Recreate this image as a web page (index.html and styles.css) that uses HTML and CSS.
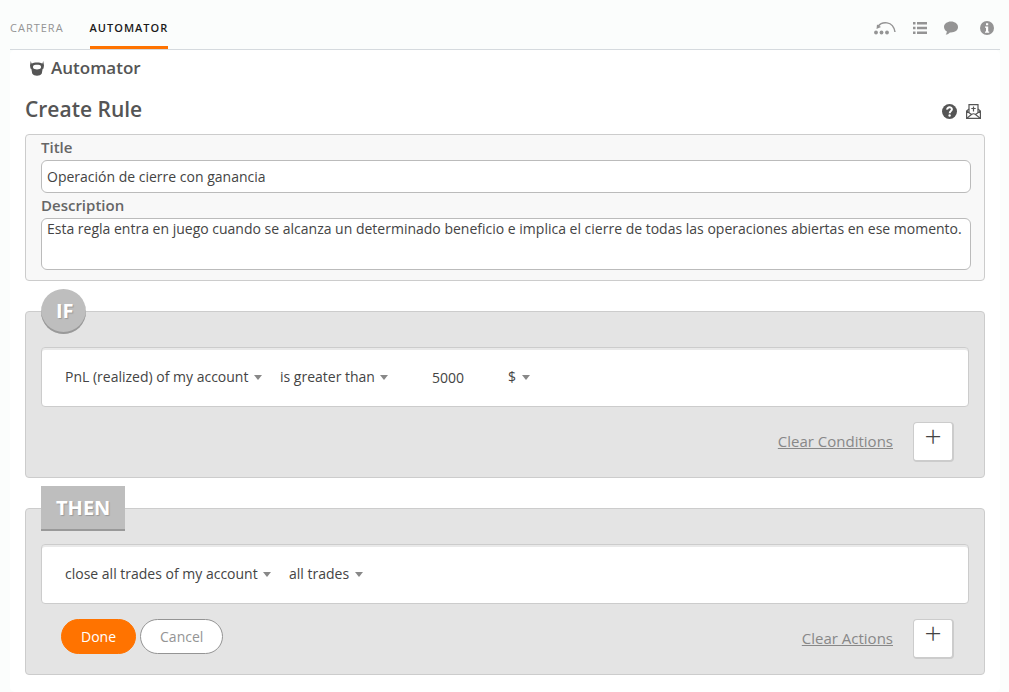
FILE: index.html
```
<!DOCTYPE html>
<html lang="es">
<head>
    <meta charset="UTF-8">
    <meta name="viewport" content="width=device-width, initial-scale=1.0">
    <title>Automator</title>
    <link rel="stylesheet" href="styles.css">
</head>
<body>

    <header class="topbar">
        <nav class="tabs">
            <a href="#" class="tab">Cartera</a>
            <a href="#" class="tab active">Automator</a>
        </nav>
        <div class="tools">
            <button class="icon-btn" aria-label="Tour">
                <svg width="22" height="14" viewBox="0 0 22 14">
                    <path d="M4 5.500C7.500 0.500 19 -1 21 11" fill="none" stroke="#949494" stroke-width="1.500"/>
                    <path d="M2.500 8L3 3.500L7 6Z" fill="#949494"/>
                    <circle cx="2" cy="11.500" r="1.900" fill="#949494"/>
                    <circle cx="7.500" cy="11.500" r="1.900" fill="#949494"/>
                    <circle cx="13" cy="11.500" r="1.900" fill="#949494"/>
                </svg>
            </button>
            <button class="icon-btn" aria-label="List">
                <svg width="14" height="12" viewBox="0 0 14 12" fill="#949494">
                    <path d="M0 0h2.500v2.500H0zM4 0h10v2.500H4zM0 4.800h2.500v2.500H0zM4 4.800h10v2.500H4zM0 9.500h2.500V12H0zM4 9.500h10V12H4z"/>
                </svg>
            </button>
            <button class="icon-btn" aria-label="Chat">
                <svg width="14" height="14" viewBox="0 0 14 14" fill="#949494">
                    <path d="M7 0.500C3 0.500 0 2.900 0 6c0 1.900 1.100 3.500 2.900 4.500C2.800 11.800 2.300 12.800 1.700 13.600 3.500 13.400 4.900 12.500 5.900 11.400 10.500 11.800 14 9.500 14 6 14 2.900 11 0.500 7 0.500z"/>
                </svg>
            </button>
            <button class="icon-btn" aria-label="Info">
                <svg width="14" height="14" viewBox="0 0 14 14">
                    <circle cx="7" cy="7" r="7" fill="#949494"/>
                    <path d="M6 2.200h2.200v2H6zM5 5.500h3.200v5H9.200v1.300H5v-1.300h1V6.800H5z" fill="#fff"/>
                </svg>
            </button>
        </div>
    </header>

    <main class="content">
        <h1 class="app-title">
            <svg width="14" height="15" viewBox="0 0 14 15" fill="#555">
                <path fill-rule="evenodd" d="M0.800 0L1.500 2.500C4 1 10 1 12.500 2.500L13.200 0 14 4.500 13.500 7.500 12.600 8 11.800 12.500C10 15.400 4 15.400 2.200 12.500L1.400 8 0.500 7.500 0 4.500zM4.500 4C2.500 4.400 2.500 7.300 4.500 8 6 8.500 8 8.500 9.500 8 11.500 7.300 11.500 4.400 9.500 4 8 3.600 6 3.600 4.500 4z"/>
            </svg>
            Automator
        </h1>

        <div class="page-head">
            <h2>Create Rule</h2>
            <div class="page-actions">
                <button class="icon-btn" aria-label="Help">
                    <svg width="15" height="15" viewBox="0 0 15 15">
                        <circle cx="7.500" cy="7.500" r="7.500" fill="#555"/>
                        <path d="M5.200 5.600C5 2.700 9.900 2.500 9.900 5.300 9.900 7.100 7.700 7 7.700 9.200" fill="none" stroke="#fff" stroke-width="2"/>
                        <circle cx="7.600" cy="11.500" r="1.200" fill="#fff"/>
                    </svg>
                </button>
                <button class="icon-btn" aria-label="Load template">
                    <svg width="15" height="15" viewBox="0 0 15 15" fill="none" stroke="#555" stroke-width="1.200">
                        <path d="M3 5L0.600 7V14.400H14.400V7L12 5M0.600 7L5.500 10.500M14.400 7L9.500 10.500M0.600 14.400L5.500 10.500Q7.500 9 9.500 10.500L14.400 14.400"/>
                        <path d="M3 8.500V0.600H12V8.500M7.500 2.500V7.500M5.300 4.500H9.700"/>
                    </svg>
                </button>
            </div>
        </div>

        <section class="info">
            <label for="title">Title</label>
            <input type="text" id="title" class="field" value="Operación de cierre con ganancia">
            <label for="description">Description</label>
            <textarea id="description" class="field">Esta regla entra en juego cuando se alcanza un determinado beneficio e implica el cierre de todas las operaciones abiertas en ese momento.</textarea>
        </section>

        <!-- Conditions -->
        <section class="panel">
            <span class="badge round">IF</span>
            <div class="rule">
                <span class="dropdown">
                    <select aria-label="Condition"><option>PnL (realized) of my account</option></select>
                </span>
                <span class="dropdown">
                    <select aria-label="Comparison"><option>is greater than</option></select>
                </span>
                <input type="text" class="amount" aria-label="Amount" value="5000">
                <span class="dropdown">
                    <select aria-label="Unit"><option>$</option></select>
                </span>
            </div>
            <div class="panel-foot">
                <a href="#" class="clear">Clear Conditions</a>
                <button class="add" aria-label="Add condition">+</button>
            </div>
        </section>

        <!-- Actions -->
        <section class="panel">
            <span class="badge">THEN</span>
            <div class="rule">
                <span class="dropdown">
                    <select aria-label="Action"><option>close all trades of my account</option></select>
                </span>
                <span class="dropdown">
                    <select aria-label="Trades"><option>all trades</option></select>
                </span>
            </div>
            <div class="panel-foot">
                <div class="buttons">
                    <button class="btn primary">Done</button>
                    <button class="btn">Cancel</button>
                </div>
                <a href="#" class="clear">Clear Actions</a>
                <button class="add" aria-label="Add action">+</button>
            </div>
        </section>
    </main>

</body>
</html>
```
FILE: styles.css
```
* {
    box-sizing: border-box;
}
body {
    margin: 0;
    padding: 0 9px 0 10px;
    min-height: 100vh;
    display: flex;
    flex-direction: column;
    font-family: "Open Sans", "Noto Sans", sans-serif;
    font-size: 14px;
    color: #444;
    background-color: #fbfdfc;
}
button, input, select, textarea {
    font: inherit;
    color: inherit;
}
button {
    cursor: pointer;
}

/* Top bar */
.topbar {
    display: flex;
    justify-content: space-between;
    height: 50px;
    border-bottom: 1px solid #d5dade;
}
.tabs {
    display: flex;
    gap: 26px;
}
.tab {
    padding-top: 9px;
    line-height: 37px;
    font-size: 11px;
    letter-spacing: 1px;
    text-transform: uppercase;
    text-decoration: none;
    color: #949494;
    border-bottom: 3px solid transparent;
}
.tab.active {
    font-weight: 600;
    color: #1a1a1a;
    border-bottom-color: #ff7300;
}
.tools {
    display: flex;
    align-items: center;
    gap: 17px;
    padding: 6px 6px 0 0;
}
.icon-btn {
    display: flex;
    padding: 0;
    border: none;
    background: none;
}
.tools .icon-btn:last-child {
    margin-left: 5px;
}

/* Page headings */
.content {
    flex: 1;
    padding: 0 15px 17px;
    border-radius: 5px;
    background-color: #fff;
}
.app-title {
    display: flex;
    align-items: center;
    gap: 7px;
    margin: 0;
    padding: 0 5px;
    line-height: 36px;
    font-size: 17px;
    font-weight: 600;
    color: #555;
}
.page-head {
    display: flex;
    justify-content: space-between;
    align-items: center;
    height: 48px;
    padding: 0 4px 2px 0;
}
.page-head h2 {
    margin: 0;
    font-size: 21px;
    font-weight: 600;
    color: #555;
}
.page-actions {
    display: flex;
    gap: 9px;
    padding-top: 4px;
}

/* Title and description */
.info {
    padding: 0 13px 10px 15px;
    border: 1px solid #ccc;
    border-radius: 4px;
    background-color: #f8f8f8;
}
.info label {
    display: block;
    line-height: 25px;
    font-size: 15px;
    font-weight: 600;
    color: #666;
}
.field {
    display: block;
    width: 100%;
    height: 33px;
    padding: 0 5px;
    border: 1px solid #bbb;
    border-radius: 6px;
    background-color: #fff;
}
textarea.field {
    height: 52px;
    line-height: 20px;
    resize: none;
}

/* IF / THEN panels */
.panel {
    position: relative;
    margin-top: 30px;
    padding: 35px 15px 15px;
    border: 1px solid #ccc;
    border-radius: 4px;
    background-color: #e4e4e4;
}
.badge {
    position: absolute;
    top: -23px;
    left: 15px;
    height: 45px;
    padding: 0 15px;
    line-height: 43px;
    font-size: 20px;
    font-weight: bold;
    color: #fff;
    text-shadow: 1px 1px 1px #999;
    background-color: #bebebe;
    box-shadow: inset 0 -2px 0 #999;
}
.badge.round {
    width: 45px;
    border-radius: 50%;
}
.rule {
    display: flex;
    align-items: center;
    gap: 18px;
    height: 60px;
    padding: 0 23px;
    border: 1px solid #ccc;
    border-radius: 4px;
    background-color: #fff;
    box-shadow: inset 0 2px 0 #e9e9e9;
}
.dropdown {
    display: flex;
    align-items: center;
    gap: 5px;
    padding-bottom: 2px;
}
.dropdown::after {
    content: "";
    margin-top: 2px;
    border: 4px solid transparent;
    border-top: 5px solid #888;
    border-bottom: none;
}
.dropdown select {
    appearance: none;
    padding: 0;
    border: none;
    background: none;
    cursor: pointer;
}
.amount {
    width: 84px;
    padding: 0;
    border: none;
    text-align: center;
    background: none;
}
.panel-foot {
    display: flex;
    justify-content: flex-end;
    align-items: center;
    gap: 20px;
    padding: 15px 15px 0 20px;
}
.clear {
    padding-bottom: 2px;
    font-size: 15px;
    color: #888;
}
.add {
    width: 41px;
    height: 40px;
    padding: 0 0 12px;
    border: 1px solid #ccc;
    border-right-width: 2px;
    border-bottom-width: 2px;
    border-radius: 4px;
    line-height: 26px;
    font-size: 30px;
    font-weight: 300;
    background-color: #fff;
}
.buttons {
    display: flex;
    gap: 4px;
    margin-right: auto;
    padding-bottom: 5px;
}
.btn {
    height: 35px;
    padding: 0 19px;
    border: 1px solid #949494;
    border-radius: 18px;
    color: #949494;
    background-color: #fff;
}
.btn.primary {
    border-color: #ff7300;
    color: #fff;
    background-color: #ff7300;
}
```
